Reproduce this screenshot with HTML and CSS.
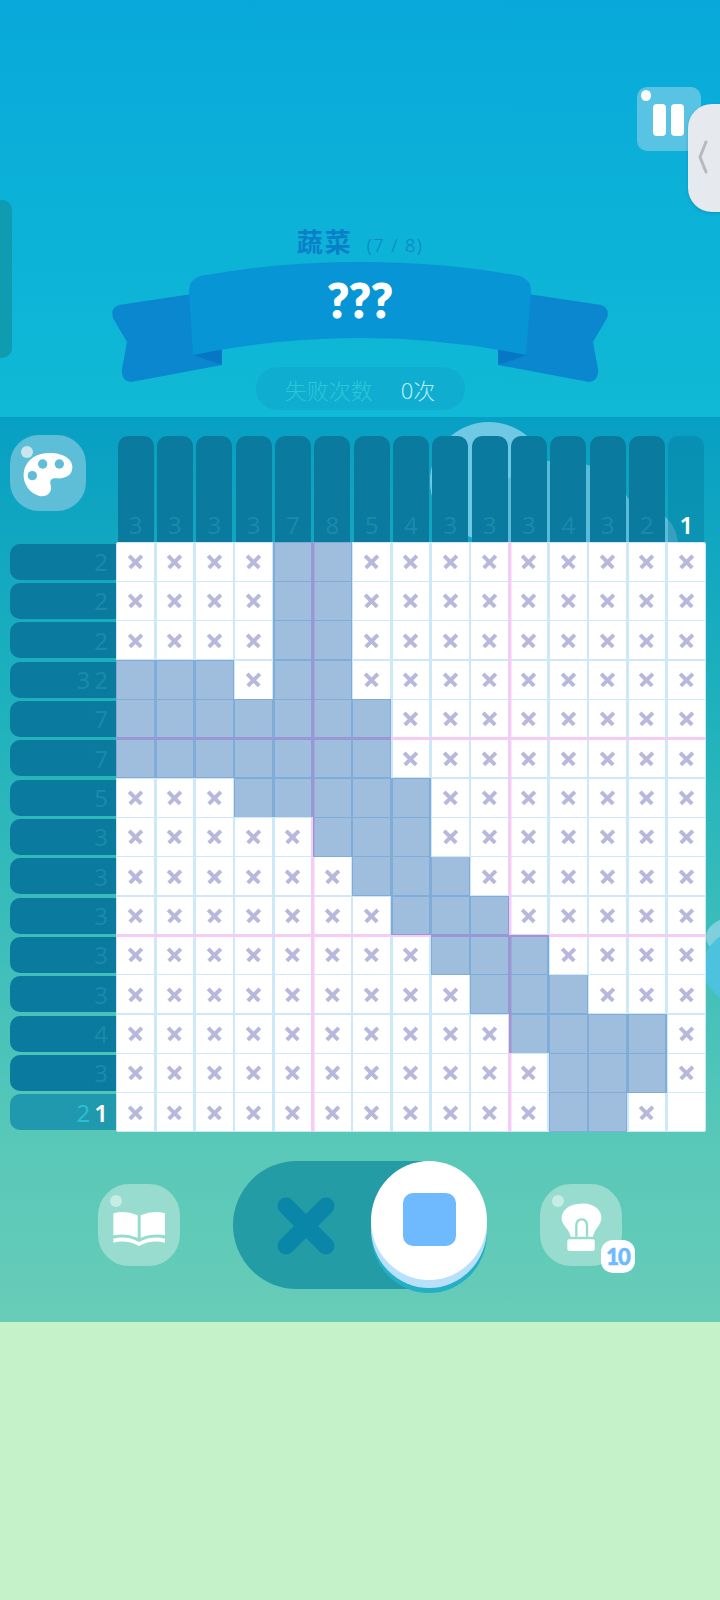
FILE: index.html
```html
<!DOCTYPE html>
<html lang="zh-CN">
<head>
  <meta charset="UTF-8" />
  <meta name="viewport" content="width=device-width, initial-scale=1.0"/>
  <title>蔬菜 7/8</title>
  <link rel="stylesheet" href="styles.css">
</head>
<body>
  <div class="side-tab"></div>
  <div class="handle">
    <svg class="handle-arrow" viewBox="0 0 12 36">
      <path d="M9 3 L3 18 L9 33" />
    </svg>
  </div>

  <header class="top">
    <div class="top-bar">
      <button class="pause"><span></span><span></span></button>
    </div>

    <div class="level">
      <span class="level-name">蔬菜</span>
      <span class="level-count">(7 / 8)</span>
    </div>

    <div class="ribbon">
      <svg class="ribbon-art" viewBox="110 262 500 124">
        <g id="tail">
          <path class="tail" d="M192 294 L119 305 Q110 308 113 318 L127 342 L122 369 Q121 381 131 382 L222 365 L222 340 Z" />
          <path class="fold" d="M193 355 L222 346 L222 365 Z" />
        </g>
        <use href="#tail" transform="matrix(-1 0 0 1 720 0)" />
        <path class="band" d="M189 290 Q189 280 200 276 Q275 262 360 262 Q445 262 520 276 Q531 280 531 290 L526 355 Q445 338 360 338 Q275 338 193 355 Z" />
      </svg>
      <span class="ribbon-text">???</span>
    </div>

    <div class="fails">
      <span class="fails-label">失败次数</span>
      <span class="fails-value">0次</span>
    </div>
  </header>

  <main class="panel">
    <div class="bubble bubble-a"></div>
    <div class="bubble bubble-b"></div>
    <div class="bubble bubble-c"></div>
    <div class="bubble bubble-d"></div>
    <div class="bubble bubble-e"></div>

    <div class="puzzle">
      <div class="corner">
        <button class="round-btn palette">
          <svg viewBox="0 0 228 228">
            <path class="white" d="M105 55 C150 50 190 68 187 100 C185 125 160 132 140 130 C125 128 118 135 122 150 C128 172 110 188 88 183 C58 175 38 145 41 115 C44 82 72 58 105 55 Z" />
            <circle class="hole" cx="98" cy="87" r="14" />
            <circle class="hole" cx="148" cy="87" r="14" />
            <circle class="hole" cx="67" cy="122" r="14" />
          </svg>
        </button>
      </div>
      <div class="col-clues" id="colClues"></div>
      <div class="row-clues" id="rowClues"></div>
      <div class="board" id="board"></div>
    </div>

    <div class="controls">
      <button class="round-btn tool">
        <svg viewBox="-6 -36 246 246">
          <path class="white" d="M40 52 Q75 42 113 58 V125 Q78 110 40 118 Z" />
          <path class="white" d="M122 58 Q160 42 195 52 V118 Q157 110 122 125 Z" />
          <path class="white" d="M40 128 Q80 118 117 138 Q155 118 195 128 V140 Q155 130 117 150 Q80 130 40 140 Z" />
        </svg>
      </button>

      <div class="toggle">
        <svg class="toggle-x" viewBox="0 0 58 58">
          <path d="M9 9 L49 49 M49 9 L9 49" />
        </svg>
        <div class="knob"><div class="knob-square"></div></div>
      </div>

      <button class="round-btn tool">
        <svg viewBox="3 -21 246 246">
          <path class="white" d="M127 38 C165 36 190 58 187 85 C184 105 168 112 162 137 L95 137 C90 112 70 105 68 85 C66 58 90 38 127 38 Z" />
          <path class="arch" d="M112 137 V105 Q112 85 128 85 Q144 85 144 105 V137" />
          <rect class="white" x="85" y="145" width="82" height="35" rx="6" />
        </svg>
        <span class="count">10</span>
      </button>
    </div>
  </main>

  <footer class="bottom"></footer>

  <script src="script.js"></script>
</body>
</html>
```

FILE: styles.css
```css
:root {
  --clue: #0a7a9e;
  --clue-num: #1b8aa9;
  --cell: 39.333px;
  --line: #cde8f8;
  --major: #f5ccf5;
}

* {
  box-sizing: border-box;
}

body {
  margin: 0;
  width: 720px;
  height: 1600px;
  display: flex;
  flex-direction: column;
  position: relative;
  overflow: hidden;
  font-family: 'Noto Sans', 'Noto Sans CJK SC', sans-serif;
  background: #c5f2c9;
}

button {
  border: none;
  padding: 0;
  cursor: pointer;
}

/* top area */
.top {
  height: 417px;
  flex: none;
  padding-top: 87px;
  display: flex;
  flex-direction: column;
  align-items: center;
  background: linear-gradient(#08a9da, #10b9d5);
}

.top-bar {
  width: 100%;
  height: 64px;
  padding-right: 19px;
  display: flex;
  justify-content: flex-end;
}

.pause {
  width: 64px;
  height: 64px;
  padding: 17px 0 15px 16px;
  border-radius: 10px;
  background: #58c3e2;
  display: flex;
  gap: 5px;
  position: relative;
}

.pause::before {
  content: '';
  position: absolute;
  left: 4px;
  top: 3px;
  width: 10px;
  height: 11px;
  border-radius: 50%;
  background: #fff;
}

.pause span {
  width: 13px;
  border-radius: 4px;
  background: #fff;
}

.side-tab {
  position: absolute;
  left: 0;
  top: 200px;
  width: 12px;
  height: 158px;
  border-radius: 0 10px 10px 0;
  background: #0f9bb0;
}

.handle {
  position: absolute;
  right: 0;
  top: 104px;
  width: 32px;
  height: 108px;
  border-radius: 24px 0 0 24px;
  background: #e6eaee;
  box-shadow: 0 1px 3px rgba(0, 60, 90, 0.25);
  z-index: 5;
  display: flex;
  align-items: center;
}

.handle-arrow {
  width: 12px;
  height: 36px;
  margin: -3px 0 0 9px;
  fill: none;
  stroke: #b5babd;
  stroke-width: 3;
  stroke-linecap: round;
}

.level {
  margin-top: 74px;
  height: 37px;
  display: flex;
  align-items: baseline;
  gap: 14px;
  color: #0a7fc8;
}

.level-name {
  font-size: 26px;
  line-height: 34px;
  font-weight: 700;
  letter-spacing: 2px;
}

.level-count {
  font-size: 18px;
  font-weight: 300;
  letter-spacing: 1.5px;
  color: #0b84c8;
}

.ribbon {
  width: 500px;
  height: 105px;
  padding-top: 11px;
  flex: none;
  position: relative;
  display: flex;
  justify-content: center;
}

.ribbon-art {
  position: absolute;
  left: 0;
  top: 0;
  width: 500px;
  height: 124px;
}

.band { fill: #0895d5; }
.tail { fill: #0a87cf; }
.fold { fill: #0577c4; }

.ribbon-text {
  position: relative;
  font-family: 'Lato', sans-serif;
  font-size: 47px;
  line-height: 54px;
  font-weight: 900;
  color: #fff;
  -webkit-text-stroke: 1px #fff;
}

.fails {
  width: 209px;
  height: 43px;
  border-radius: 22px;
  background: #0fadd0;
  display: flex;
  justify-content: center;
  align-items: center;
  gap: 28px;
  font-size: 22px;
  font-weight: 300;
  position: relative;
}

.fails-label { color: #2bc8d8; }
.fails-value { color: #b9edf3; }

/* board panel */
.panel {
  height: 905px;
  flex: none;
  position: relative;
  overflow: hidden;
  background: linear-gradient(#079fc4 0%, #20b2bc 34%, #58c8b8 80%, #68ccb8 100%);
}

.bubble {
  position: absolute;
  border-radius: 50%;
  background: #58bcd8;
}

.bubble-a { left: 430px; top: 5px; width: 118px; height: 118px; background: #6fc8e4; }
.bubble-b { left: 480px; top: 43px; width: 160px; height: 160px; }
.bubble-c { left: 602px; top: 90px; width: 76px; height: 76px; }
.bubble-d { left: 706px; top: 500px; width: 60px; height: 40px; background: #7fd0dc; }
.bubble-e { left: 703px; top: 512px; width: 84px; height: 76px; background: #4cc2de; }

.puzzle {
  position: relative;
  padding-left: 10px;
  display: grid;
  grid-template-columns: 106px 590px;
  grid-template-rows: 125px 590px;
}

.corner {
  padding-top: 18px;
}

.round-btn {
  display: block;
  position: relative;
  border-radius: 38%;
}

.round-btn svg {
  display: block;
  width: 100%;
  height: 100%;
}

.round-btn::before {
  content: '';
  position: absolute;
  border-radius: 50%;
}

.white { fill: #fff; }

.palette {
  width: 76px;
  height: 76px;
  background: #5fbed7;
}

.palette::before {
  left: 11px;
  top: 11px;
  width: 12px;
  height: 12px;
  background: #c9e6ee;
}

.hole { fill: #5fbed7; }

.col-clues {
  display: grid;
  grid-template-columns: repeat(15, var(--cell));
  align-items: end;
  justify-items: center;
}

.col-clue {
  width: 36px;
  height: 106px;
  padding-bottom: 2px;
  border-radius: 10px 10px 0 0;
  background: var(--clue);
  display: flex;
  flex-direction: column;
  justify-content: flex-end;
  align-items: center;
  font-size: 24px;
  line-height: 30px;
  color: var(--clue-num);
}

.col-clue.done {
  background: rgba(8, 122, 160, 0.42);
}

.row-clues {
  display: grid;
  grid-template-rows: repeat(15, var(--cell));
  align-items: center;
}

.row-clue {
  height: 36px;
  padding-right: 8px;
  border-radius: 10px 0 0 10px;
  background: var(--clue);
  display: flex;
  justify-content: flex-end;
  align-items: center;
  gap: 4px;
  font-size: 24px;
  color: var(--clue-num);
}

.row-clue.active {
  background: #2099ae;
  color: #28bfd0;
}

.clue-lit {
  color: #fff;
  font-weight: 600;
}

.board {
  position: relative;
  z-index: 1;
  width: 590px;
  height: 590px;
  border-radius: 3px;
  overflow: hidden;
  display: grid;
  grid-template-columns: repeat(15, 1fr);
  grid-template-rows: repeat(15, 1fr);
  background: #fff;
}

/* grid lines, multiplied so they darken over filled cells */
.board::after {
  content: '';
  position: absolute;
  inset: 0;
  pointer-events: none;
  mix-blend-mode: multiply;
  background:
    linear-gradient(var(--major), var(--major)) 195px 0 / 3.5px 100% no-repeat,
    linear-gradient(var(--major), var(--major)) 391.6px 0 / 3.5px 100% no-repeat,
    linear-gradient(var(--major), var(--major)) 0 195.2px / 100% 3px no-repeat,
    linear-gradient(var(--major), var(--major)) 0 391.8px / 100% 3px no-repeat,
    repeating-linear-gradient(90deg, var(--line) 0 1.25px, transparent 1.25px 38.08px, var(--line) 38.08px 39.333px),
    repeating-linear-gradient(0deg, var(--line) 0 0.8px, transparent 0.8px 38.533px, var(--line) 38.533px 39.333px);
}

.cell {
  display: flex;
  justify-content: center;
  align-items: center;
}

.cell.filled {
  background: #9fbedd;
}

.cell.cross::before {
  content: '';
  width: 17px;
  height: 17px;
  transform: rotate(45deg);
  background:
    linear-gradient(#b7b8dc, #b7b8dc) center / 100% 4px no-repeat,
    linear-gradient(#b7b8dc, #b7b8dc) center / 4px 100% no-repeat;
}

/* tools under the board */
.controls {
  position: relative;
  margin-top: 29px;
  padding-left: 98px;
  display: flex;
  align-items: center;
  gap: 53px;
}

.tool {
  width: 82px;
  height: 82px;
  background: #97dccf;
}

.tool::before {
  left: 12px;
  top: 11px;
  width: 12px;
  height: 12px;
  background: #c5ece5;
}

.arch {
  fill: none;
  stroke: #97dccf;
  stroke-width: 7;
}

.count {
  position: absolute;
  left: 61px;
  top: 56px;
  width: 34px;
  height: 33px;
  border-radius: 12px;
  background: #fff;
  color: #6fbaff;
  font-family: 'Lato', sans-serif;
  font-size: 22px;
  font-weight: 900;
  line-height: 33px;
  text-align: center;
  letter-spacing: -1px;
  -webkit-text-stroke: 0.6px #6fbaff;
}

.toggle {
  width: 254px;
  height: 128px;
  padding-left: 44px;
  border-radius: 64px;
  background: #249ca5;
  display: flex;
  justify-content: space-between;
  align-items: flex-start;
}

.toggle-x {
  width: 58px;
  height: 58px;
  margin-top: 36px;
  fill: none;
  stroke: #0a86a8;
  stroke-width: 17;
  stroke-linecap: round;
}

.knob {
  width: 116px;
  height: 119px;
  padding-bottom: 2px;
  border-radius: 50%;
  background: #fff;
  box-shadow: 0 8px 0 #b8e0fb, 0 13px 0 #23afc6;
  display: flex;
  justify-content: center;
  align-items: center;
}

.knob-square {
  width: 53px;
  height: 53px;
  border-radius: 10px;
  background: #6fbaff;
}

.bottom {
  flex: 1;
  background: #c5f2c9;
}
```

FILE: script.js
```js
// # = filled, x = crossed out, . = still empty
const rows = [
  'xxxx##xxxxxxxxx',
  'xxxx##xxxxxxxxx',
  'xxxx##xxxxxxxxx',
  '###x##xxxxxxxxx',
  '#######xxxxxxxx',
  '#######xxxxxxxx',
  'xxx#####xxxxxxx',
  'xxxxx###xxxxxxx',
  'xxxxxx###xxxxxx',
  'xxxxxxx###xxxxx',
  'xxxxxxxx###xxxx',
  'xxxxxxxxx###xxx',
  'xxxxxxxxxx####x',
  'xxxxxxxxxxx###x',
  'xxxxxxxxxxx##x.'
];

const rowClues = [[2], [2], [2], [3, 2], [7], [7], [5], [3], [3], [3], [3], [3], [4], [3], [2, 1]];
const colClues = [3, 3, 3, 3, 7, 8, 5, 4, 3, 3, 3, 4, 3, 2, 1];

const board = document.getElementById('board');
rows.forEach(row => {
  [...row].forEach(mark => {
    const cell = document.createElement('div');
    cell.className = 'cell';
    if (mark === '#') cell.classList.add('filled');
    if (mark === 'x') cell.classList.add('cross');
    board.appendChild(cell);
  });
});

const colBox = document.getElementById('colClues');
colClues.forEach((num, i) => {
  const clue = document.createElement('div');
  clue.className = 'col-clue';
  const span = document.createElement('span');
  span.textContent = num;
  // last column is solved
  if (i === 14) {
    clue.classList.add('done');
    span.className = 'clue-lit';
  }
  clue.appendChild(span);
  colBox.appendChild(clue);
});

const rowBox = document.getElementById('rowClues');
rowClues.forEach((nums, i) => {
  const clue = document.createElement('div');
  clue.className = 'row-clue';
  if (i === 14) clue.classList.add('active');
  nums.forEach((num, j) => {
    const span = document.createElement('span');
    span.textContent = num;
    if (i === 14 && j === 1) span.className = 'clue-lit';
    clue.appendChild(span);
  });
  rowBox.appendChild(clue);
});
```
